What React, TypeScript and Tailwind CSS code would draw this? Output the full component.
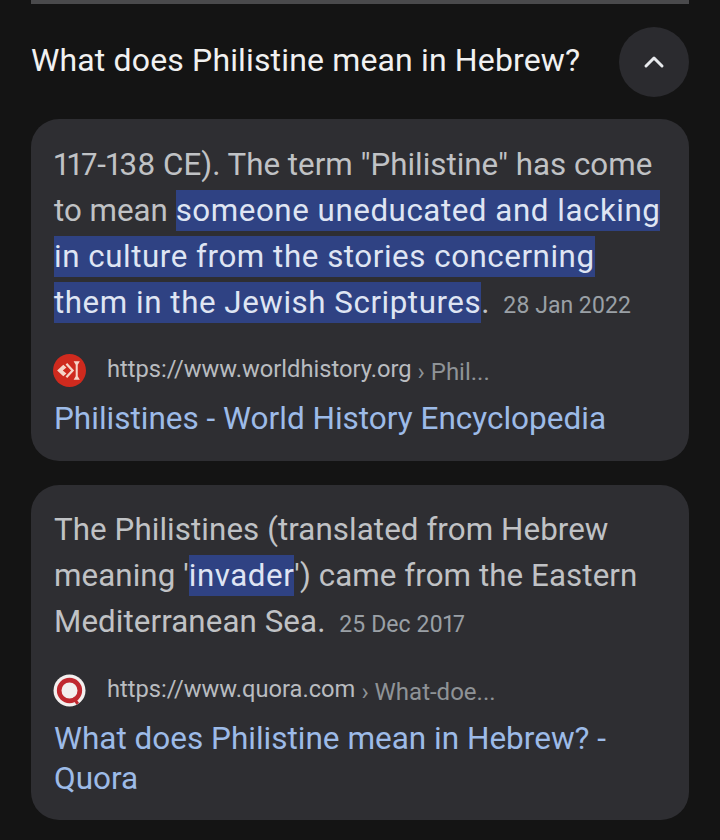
import { ChevronUp } from "lucide-react";

const Mark = ({ children }: { children: React.ReactNode }) => (
  <mark className="bg-[#2f4283] text-[#dfe5f3] font-[450] tracking-[0.55px] py-[2px]">{children}</mark>
);

function Source({ icon, url, crumb }: { icon: React.ReactNode; url: string; crumb: string }) {
  return (
    <div className="flex items-center h-[34px]">
      <div className="w-[33px] h-[33px] -ml-[1px] shrink-0">{icon}</div>
      <span className="ml-[21px] text-[23.7px] text-[#b9bcc0] whitespace-nowrap">{url}</span>
      <span className="ml-[6px] mt-[4px] text-[24px] text-[#8f9397] whitespace-nowrap">› {crumb}</span>
    </div>
  );
}

export default function App() {
  return (
    <div className="w-[720px] h-[840px] overflow-hidden bg-[#141414] font-['Roboto',sans-serif] proportional-nums">
      <div className="mx-[31px] h-[4px] bg-[#4a4a4c]" />

      {/* Question row */}
      <div className="flex items-center justify-between px-[31px] h-[115px]">
        <h2 className="-mt-[4px] text-[32px] tracking-[0.15px] font-normal text-[#f1f1f1]">What does Philistine mean in Hebrew?</h2>
        <button className="w-[70px] h-[70px] rounded-full bg-[#2b2b2f] flex items-center justify-center text-[#e8eaed]">
          <ChevronUp size={32} strokeWidth={2.25} />
        </button>
      </div>

      {/* Answer cards */}
      <div className="mx-[31px] flex flex-col gap-[24px]">
        <div className="h-[342px] rounded-[28px] bg-[#2e2e32] pl-[23px] pr-[20px] pt-[23px]">
          <p className="text-[31.3px] leading-[46px] text-[#c0c2c5]">
            117-138 CE). The term "Philistine" has come to mean{" "}
            <Mark>someone uneducated and lacking in culture from the stories concerning them in the Jewish Scriptures</Mark>
            . <span className="ml-[6px] text-[23px] text-[#9aa0a6]">28 Jan 2022</span>
          </p>
          <div className="mt-[24px]">
            <Source
              url="https://www.worldhistory.org"
              crumb="Phil..."
              icon={
                <svg viewBox="0 0 32 32" className="w-full h-full">
                  <circle cx="16" cy="16" r="16" fill="#cf2a1e" />
                  <path d="M4 16l6-5.5 3 2.5-3.5 3 3.5 3-3 2.5z" fill="#f6d5c8" />
                  <path d="M13 9.5l6 6.5-6 6.5" fill="none" stroke="#f6d5c8" strokeWidth="2.2" />
                  <path d="M20 7h6l-2 3.5v11l2 3.5h-6l2-3.5v-11z" fill="#f6d5c8" />
                </svg>
              }
            />
            <a className="block mt-[12px] text-[31.5px] leading-[40px] text-[#9dbbe8]">Philistines - World History Encyclopedia</a>
          </div>
        </div>

        <div className="h-[335px] rounded-[28px] bg-[#2e2e32] pl-[23px] pr-[20px] pt-[22px]">
          <p className="text-[31.3px] leading-[46px] text-[#c0c2c5] tracking-[0.08px]">
            The Philistines (translated from Hebrew meaning '<Mark>invader</Mark>') came from the Eastern Mediterranean Sea.{" "}
            <span className="ml-[6px] text-[23px] text-[#9aa0a6]">25 Dec 2017</span>
          </p>
          <div className="mt-[25px]">
            <Source
              url="https://www.quora.com"
              crumb="What-doe..."
              icon={
                <svg viewBox="0 0 32 32" className="w-full h-full">
                  <circle cx="16" cy="16" r="15.5" fill="#f3efee" />
                  <circle cx="16" cy="16" r="10" fill="none" stroke="#c0282f" strokeWidth="4.5" />
                  <path d="M20 23l4 6" stroke="#c0282f" strokeWidth="3" />
                </svg>
              }
            />
            <a className="block mt-[12px] text-[31.5px] leading-[40px] text-[#9dbbe8]">What does Philistine mean in Hebrew? - Quora</a>
          </div>
        </div>
      </div>
    </div>
  );
}
